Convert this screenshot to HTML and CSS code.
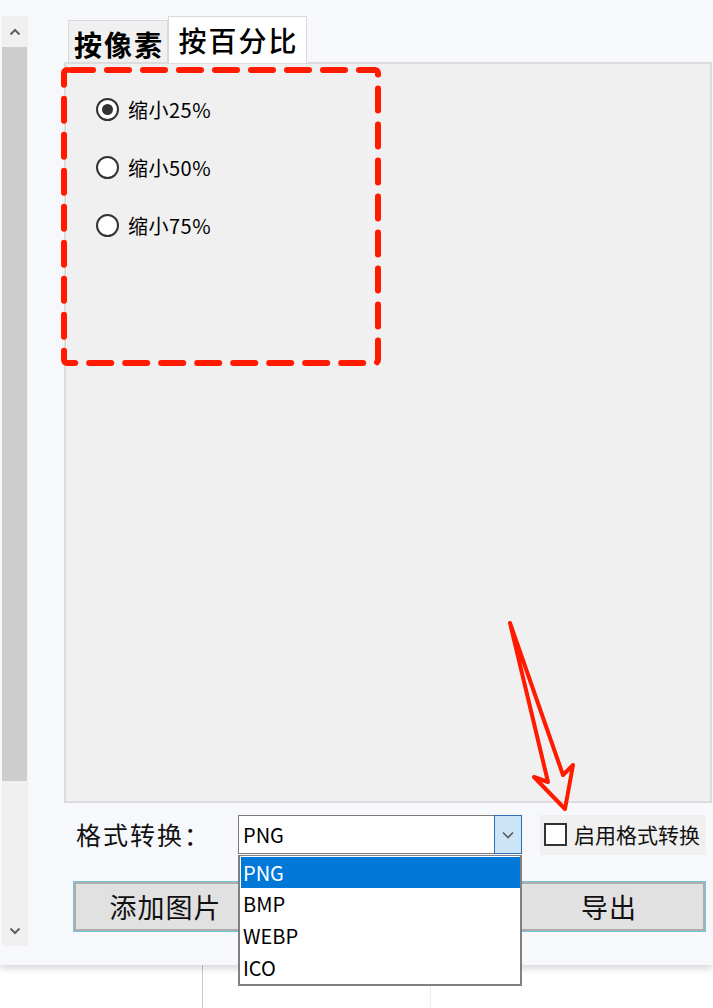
FILE: index.html
```html
<!DOCTYPE html>
<html lang="zh-CN">
<head>
<meta charset="utf-8">
<title>缩放</title>
<link rel="stylesheet" href="styles.css">
</head>
<body>
<div class="window">
  <div class="scrollbar">
    <div class="sb-btn">
      <svg width="12" height="8" viewBox="0 0 12 8"><path d="M1.5 6.5 L6 2 L10.5 6.5" fill="none" stroke="#606060" stroke-width="2"/></svg>
    </div>
    <div class="sb-thumb"></div>
    <div class="sb-track"></div>
    <div class="sb-btn">
      <svg width="12" height="8" viewBox="0 0 12 8"><path d="M1.5 1.5 L6 6 L10.5 1.5" fill="none" stroke="#606060" stroke-width="2"/></svg>
    </div>
  </div>
  <div class="main">
    <div class="tabs">
      <div class="tab tab-inactive">按像素</div>
      <div class="tab tab-active">按百分比</div>
    </div>
    <div class="panel">
      <label class="radio-row"><span class="radio checked"></span><span class="radio-label">缩小25%</span></label>
      <label class="radio-row"><span class="radio"></span><span class="radio-label">缩小50%</span></label>
      <label class="radio-row"><span class="radio"></span><span class="radio-label">缩小75%</span></label>
    </div>
    <div class="format-row">
      <span class="format-label">格式转换：</span>
      <div class="combo">
        <span class="combo-text">PNG</span>
        <span class="combo-btn">
          <svg width="12" height="8" viewBox="0 0 12 8"><path d="M1 1.5 L6 6.5 L11 1.5" fill="none" stroke="#5a5a5a" stroke-width="1.6"/></svg>
        </span>
        <ul class="dropdown">
          <li class="item selected">PNG</li>
          <li class="item">BMP</li>
          <li class="item">WEBP</li>
          <li class="item">ICO</li>
        </ul>
      </div>
      <label class="check-group"><span class="checkbox"></span><span class="check-label">启用格式转换</span></label>
    </div>
    <div class="button-row">
      <button class="btn btn-add">添加图片</button>
      <button class="btn btn-export">导出</button>
    </div>
  </div>
</div>
<div class="below">
  <div class="below-a"></div>
  <div class="below-b"></div>
  <div class="below-c"></div>
</div>
<svg class="annot" width="713" height="1008" viewBox="0 0 713 1008">
  <rect x="64" y="70" width="314" height="293" rx="3" fill="none" stroke="#ff1a00" stroke-width="6" stroke-dasharray="22 14" stroke-linecap="round" stroke-dashoffset="-4"/>
  <polygon points="510,623 548,782 534,777 565,809 573,765 563,775" fill="none" stroke="#ff1a00" stroke-width="4" stroke-linejoin="round"/>
</svg>
</body>
</html>
```

FILE: styles.css
```css
html, body {
  margin: 0;
  padding: 0;
}
body {
  width: 713px;
  height: 1008px;
  overflow: hidden;
  background: #ffffff;
  font-family: "Noto Sans CJK SC", "Noto Sans", sans-serif;
  color: #000;
  position: relative;
}
.window {
  height: 965px;
  background: #f7f8fc;
  display: flex;
  box-shadow: 0 3px 8px rgba(0, 0, 0, 0.18);
  position: relative;
  z-index: 1;
}
.scrollbar {
  margin-top: 16px;
  margin-left: 2px;
  width: 26px;
  height: 930px;
  background: #f0f0f0;
  display: flex;
  flex-direction: column;
}
.sb-btn {
  height: 31px;
  display: flex;
  align-items: center;
  justify-content: center;
  flex: none;
}
.sb-thumb {
  height: 734px;
  background: #cdcdcd;
  flex: none;
  margin-right: 1px;
}
.sb-track {
  flex: 1;
}
.main {
  margin-left: 36px;
  width: 648px;
  display: flex;
  flex-direction: column;
  position: relative;
}
.tabs {
  display: flex;
  align-items: flex-end;
  margin-top: 16px;
  padding-left: 4px;
  height: 46px;
  position: relative;
  z-index: 2;
}
.tab {
  border: 1px solid #d9d9d9;
  border-bottom: none;
  box-sizing: border-box;
  font-size: 28px;
  line-height: 1;
  display: flex;
  align-items: center;
  justify-content: center;
  letter-spacing: 2px;
  padding-left: 2px;
}
.tab-inactive {
  width: 100px;
  height: 42px;
  background: #f0f0f0;
  font-weight: 700;
  padding-top: 4px;
}
.tab-active {
  width: 139px;
  height: 47px;
  background: #ffffff;
  margin-bottom: -1px;
  font-weight: 500;
}
.panel {
  height: 741px;
  box-sizing: border-box;
  background: #f0f0f0;
  border: 2px solid #dcdcdc;
  padding: 34px 0 0 30px;
  display: flex;
  flex-direction: column;
  gap: 35px;
}
.radio-row {
  display: flex;
  align-items: center;
  height: 23px;
}
.radio {
  width: 23px;
  height: 23px;
  box-sizing: border-box;
  border: 2px solid #333;
  border-radius: 50%;
  background: #fff;
  position: relative;
  flex: none;
}
.radio.checked::after {
  content: "";
  position: absolute;
  left: 4px;
  top: 4px;
  width: 11px;
  height: 11px;
  border-radius: 50%;
  background: #333;
}
.radio-label {
  margin-left: 9px;
  font-size: 20px;
  line-height: 1;
  letter-spacing: 0.5px;
}
.format-row {
  margin-top: 12px;
  height: 39px;
  display: flex;
  align-items: center;
  position: relative;
  z-index: 3;
}
.format-label {
  width: 162px;
  padding-left: 12px;
  font-size: 25px;
  line-height: 1;
  color: #111;
  letter-spacing: 2px;
  white-space: nowrap;
}
.combo {
  width: 284px;
  height: 39px;
  box-sizing: border-box;
  border: 1px solid #7a7a7a;
  background: #fff;
  display: flex;
  align-items: center;
  position: relative;
}
.combo-text {
  flex: 1;
  padding-left: 4px;
  font-size: 20px;
  line-height: 1;
}
.combo-btn {
  width: 28px;
  height: 39px;
  margin: -1px -1px -1px 0;
  box-sizing: border-box;
  border: 1px solid #2e70b8;
  background: #cce4f7;
  display: flex;
  align-items: center;
  justify-content: center;
}
.dropdown {
  position: absolute;
  left: -1px;
  top: 39px;
  width: 284px;
  height: 131px;
  box-sizing: border-box;
  margin: 0;
  padding: 1px;
  list-style: none;
  background: #fff;
  border: 2px solid #808080;
  border-top-width: 1px;
}
.item {
  height: 32px;
  display: flex;
  align-items: center;
  padding-left: 2px;
  font-size: 20px;
  line-height: 1;
  color: #000;
}
.item.selected {
  height: 31px;
  width: 277px;
  background: #0078d7;
  color: #fff;
}
.check-group {
  margin-left: 18px;
  width: 166px;
  height: 40px;
  background: #f0f0f0;
  display: flex;
  align-items: center;
}
.checkbox {
  width: 23px;
  height: 23px;
  box-sizing: border-box;
  border: 2px solid #333;
  background: #fff;
  margin-left: 4px;
  flex: none;
}
.check-label {
  margin-left: 7px;
  font-size: 21px;
  line-height: 1;
  color: #111;
  white-space: nowrap;
}
.button-row {
  margin-top: 27px;
  display: flex;
  justify-content: space-between;
  padding-left: 9px;
  padding-right: 6px;
}
.btn {
  height: 49px;
  box-sizing: border-box;
  border: 2px solid #adadad;
  box-shadow: 0 0 0 1px #72c7df;
  background: #e1e1e1;
  font-family: "Noto Sans CJK SC", "Noto Sans", sans-serif;
  font-size: 27px;
  line-height: 1;
  color: #111;
  padding: 0;
  margin: 1px;
  letter-spacing: 1px;
}
.btn-add {
  width: 183px;
}
.btn-export {
  width: 192px;
}
.below {
  height: 43px;
  display: flex;
}
.below-a {
  width: 202px;
  border-right: 1px solid #c8c8c8;
}
.below-b {
  width: 227px;
  border-right: 1px solid #eeeeee;
}
.below-c {
  flex: 1;
}
.annot {
  position: absolute;
  left: 0;
  top: 0;
  z-index: 5;
  pointer-events: none;
}
```
